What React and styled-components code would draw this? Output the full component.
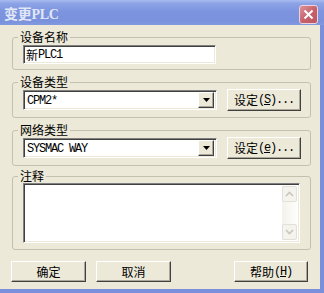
import React from "react"
import styled, { createGlobalStyle, css } from "styled-components"

const frame = "#7a8fdc"

const GlobalStyle = createGlobalStyle`
	body {
		margin: 0;
		background: #fff;
	}
`

const Window = styled.div`
	width: 324px;
	height: 293px;
	display: flex;
	flex-direction: column;
	overflow: hidden;
	font-family: "Noto Sans CJK SC", "Liberation Sans", sans-serif;
	font-size: 12px;
	color: #000;
`

const TitleBar = styled.div`
	height: 25px;
	flex-shrink: 0;
	box-sizing: border-box;
	display: flex;
	align-items: center;
	justify-content: space-between;
	padding: 0 6px 0 4px;
	background: linear-gradient(
		to bottom,
		#aabcf0 0%,
		#8ca3e6 14%,
		#7d95df 45%,
		#7a92dd 85%,
		#8399df 100%
	);
`

const Title = styled.span`
	font-family: "Liberation Serif", "Noto Sans CJK SC", serif;
	font-weight: bold;
	font-size: 14px;
	color: #e1e7f7;
	letter-spacing: -0.3px;
`

const CloseButton = styled.div`
	width: 19px;
	height: 19px;
	margin-top: 3px;
	box-sizing: border-box;
	border: 1px solid #efd3dc;
	border-radius: 3px;
	background: linear-gradient(135deg, #dc939a, #c65f69 55%, #bb5663);
	display: flex;
	align-items: center;
	justify-content: center;
`

const Body = styled.div`
	flex: 1;
	background: #ece9d8;
	border-right: 4px solid ${frame};
	border-bottom: 4px solid ${frame};
	padding: 5px 9px 0 12px;
	display: flex;
	flex-direction: column;
`

const GroupBox = styled.fieldset`
	margin: ${(p) => p.$gap || 0}px 0 0;
	padding: ${(p) => p.$pt || 0}px 9px ${(p) => p.$pb || 0}px 10px;
	border: 1px solid #c3c0af;
	border-radius: 3px;
	min-width: 0;
`

const Legend = styled.legend`
	padding: 0 2px;
	margin-left: -5px;
	line-height: 14px;
	font-size: 12px;
`

const Row = styled.div`
	display: flex;
	align-items: center;
	justify-content: space-between;
`

const sunken = css`
	box-sizing: border-box;
	background: #fff;
	border: 1px solid;
	border-color: #808080 #fff #fff #808080;
	box-shadow: inset 1px 1px 0 #404040, inset -1px -1px 0 #ece9d8;
`

const raised = css`
	box-sizing: border-box;
	background: #ece9d8;
	border: 1px solid;
	border-color: #fff #404040 #404040 #fff;
	box-shadow: inset -1px -1px 0 #aca899;
`

const TextField = styled.div`
	${sunken};
	width: 193px;
	height: 19px;
	display: flex;
	align-items: center;
	padding-left: 2px;
	line-height: 14px;
`

const Combo = styled.div`
	${sunken};
	width: 194px;
	height: 20px;
	display: flex;
	align-items: center;
	padding: 2px;
	line-height: 14px;
`

const ComboValue = styled.div`
	flex: 1;
	padding-left: 1px;
`

const DropButton = styled.div`
	${raised};
	width: 16px;
	height: 16px;
	display: flex;
	align-items: center;
	justify-content: center;
`

const PushButton = styled.div`
	${raised};
	width: ${(p) => p.$w || 75}px;
	height: ${(p) => p.$h || 21}px;
	display: flex;
	align-items: center;
	justify-content: center;
	line-height: 14px;
`

const Asc = styled.span`
	font-family: "Liberation Mono", monospace;
	font-size: 12px;
	letter-spacing: -1.2px;
`

const Memo = styled.div`
	${sunken};
	width: 277px;
	height: 60px;
	display: flex;
	justify-content: flex-end;
	padding: 2px;
`

const ScrollBar = styled.div`
	width: 15px;
	display: flex;
	flex-direction: column;
	justify-content: space-between;
	background: linear-gradient(to right, #f3f2ec, #fdfdfb);
`

const ScrollArrow = styled.div`
	height: 16px;
	box-sizing: border-box;
	border: 1px solid #e3e1d6;
	border-radius: 2px;
	background: #f4f3ed;
	display: flex;
	align-items: center;
	justify-content: center;
`

const Footer = styled.div`
	display: flex;
	gap: 10px;
	margin: 11px 3px 0 -1px;
`

const Spacer = styled.div`
	flex: 1;
`

const Arrow = () => (
	<svg width="7" height="4" viewBox="0 0 7 4">
		<polygon points="0,0 7,0 3.5,4" fill="#000" />
	</svg>
)

const Chevron = ({ up }) => (
	<svg width="9" height="6" viewBox="0 0 9 6">
		<polyline
			points={up ? "1,5 4.5,1.5 8,5" : "1,1 4.5,4.5 8,1"}
			fill="none"
			stroke="#c9c7bd"
			strokeWidth="1.6"
		/>
	</svg>
)

const App = () => (
	<>
		<GlobalStyle />
		<Window>
			<TitleBar>
				<Title>变更PLC</Title>
				<CloseButton>
					<svg width="11" height="11" viewBox="0 0 11 11">
						<path d="M1.5 1.5 L9.5 9.5 M9.5 1.5 L1.5 9.5" stroke="#fff" strokeWidth="2" />
					</svg>
				</CloseButton>
			</TitleBar>
			<Body>
				<GroupBox $pt={1} $pb={5}>
					<Legend>设备名称</Legend>
					<TextField>
						新<Asc>PLC1</Asc>
					</TextField>
				</GroupBox>

				<GroupBox $gap={5} $pb={6}>
					<Legend>设备类型</Legend>
					<Row>
						<Combo>
							<ComboValue>
								<Asc>CPM2*</Asc>
							</ComboValue>
							<DropButton>
								<Arrow />
							</DropButton>
						</Combo>
						<PushButton $w={74} $h={22}>
							设定<Asc>
								(<u>S</u>)...
							</Asc>
						</PushButton>
					</Row>
				</GroupBox>

				<GroupBox $gap={5} $pb={6}>
					<Legend>网络类型</Legend>
					<Row>
						<Combo>
							<ComboValue>
								<Asc>SYSMAC WAY</Asc>
							</ComboValue>
							<DropButton>
								<Arrow />
							</DropButton>
						</Combo>
						<PushButton $w={74} $h={22}>
							设定<Asc>
								(<u>e</u>)...
							</Asc>
						</PushButton>
					</Row>
				</GroupBox>

				<GroupBox $gap={3} $pb={6}>
					<Legend>注释</Legend>
					<Memo>
						<ScrollBar>
							<ScrollArrow>
								<Chevron up />
							</ScrollArrow>
							<ScrollArrow>
								<Chevron />
							</ScrollArrow>
						</ScrollBar>
					</Memo>
				</GroupBox>

				<Footer>
					<PushButton>确定</PushButton>
					<PushButton>取消</PushButton>
					<Spacer />
					<PushButton $w={74}>
						帮助<Asc>
							(<u>H</u>)
						</Asc>
					</PushButton>
				</Footer>
			</Body>
		</Window>
	</>
)

export default App
